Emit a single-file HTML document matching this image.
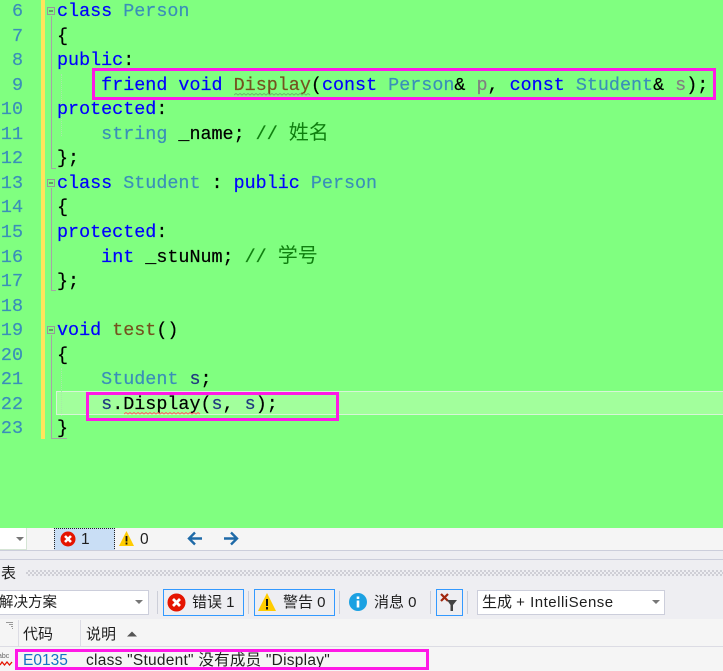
<!DOCTYPE html>
<html lang="zh">
<head>
<meta charset="utf-8">
<style>
html,body{margin:0;padding:0;width:723px;height:670px;overflow:hidden;background:#f5f5f5}
*{box-sizing:border-box}
.a{position:absolute}
#ed{position:absolute;left:0;top:0;width:723px;height:528px;background:#80ff80;overflow:hidden}
.l{position:absolute;left:57px;white-space:pre;font:18.4px/24px "Liberation Mono","Noto Sans CJK SC",monospace;color:#000;height:24px;-webkit-text-stroke:.2px}
.n{position:absolute;left:0;width:23px;text-align:right;font:18.4px/24px "Liberation Mono",monospace;color:#3a8fb8;-webkit-text-stroke:.2px}
.k{color:#0000ff}.t{color:#3a8fb8}.f{color:#74531f}.c{color:#0f7f0f}.p{color:#808080}.v{color:#1f377f}
.zh{font-family:"Noto Sans CJK SC",sans-serif;font-size:20px;line-height:0;-webkit-text-stroke:0;font-weight:400}
.box{position:absolute;border:3px solid #ff19e6}
.u{font:15px/20px "Liberation Sans","Noto Sans CJK SC",sans-serif;color:#1e1e1e;position:absolute;white-space:pre}
.btn{position:absolute;top:589px;height:27px;border:1px solid #3399ff;background:#eeeef2}
.sep{position:absolute;top:591px;width:1px;height:23px;background:#ccced8}
</style>
</head>
<body>
<div id="ed">
  <div class="a" style="left:41px;top:0;width:4px;height:439px;background:#ffe45c"></div>
  <div class="a" style="left:56px;top:391px;width:667px;height:24px;background:#a2ff9c;border:1px solid #d8f5d8;border-right:0"></div>

  <!-- fold guides -->
  <div class="a" style="left:51px;top:16px;width:1px;height:153px;background:#a5a5a5"></div>
  <div class="a" style="left:51px;top:168px;width:5px;height:1px;background:#a5a5a5"></div>
  <div class="a" style="left:51px;top:188px;width:1px;height:103px;background:#a5a5a5"></div>
  <div class="a" style="left:51px;top:290px;width:5px;height:1px;background:#a5a5a5"></div>
  <div class="a" style="left:51px;top:335px;width:1px;height:104px;background:#a5a5a5"></div>
  <div class="a" style="left:51px;top:438px;width:16px;height:1px;background:#a5a5a5"></div>
  <div class="a" style="left:61px;top:74px;width:1px;height:62px;border-left:1px dotted #a8e8a8"></div>
  <div class="a" style="left:61px;top:368px;width:1px;height:48px;border-left:1px dotted #a8e8a8"></div>

  <!-- fold markers -->
  <svg class="a" style="left:47px;top:7px" width="9" height="9"><rect x=".5" y=".5" width="7" height="7" fill="#80ff80" stroke="#999"/><path d="M2 4h4" stroke="#444"/></svg>
  <svg class="a" style="left:47px;top:179px" width="9" height="9"><rect x=".5" y=".5" width="7" height="7" fill="#80ff80" stroke="#999"/><path d="M2 4h4" stroke="#444"/></svg>
  <svg class="a" style="left:47px;top:326px" width="9" height="9"><rect x=".5" y=".5" width="7" height="7" fill="#80ff80" stroke="#999"/><path d="M2 4h4" stroke="#444"/></svg>

  <!-- line numbers -->
  <div class="n" style="top:0px">6</div>
  <div class="n" style="top:25px">7</div>
  <div class="n" style="top:49px">8</div>
  <div class="n" style="top:74px">9</div>
  <div class="n" style="top:98px">10</div>
  <div class="n" style="top:123px">11</div>
  <div class="n" style="top:147px">12</div>
  <div class="n" style="top:172px">13</div>
  <div class="n" style="top:196px">14</div>
  <div class="n" style="top:221px">15</div>
  <div class="n" style="top:246px">16</div>
  <div class="n" style="top:270px">17</div>
  <div class="n" style="top:295px">18</div>
  <div class="n" style="top:319px">19</div>
  <div class="n" style="top:344px">20</div>
  <div class="n" style="top:368px">21</div>
  <div class="n" style="top:393px">22</div>
  <div class="n" style="top:417px">23</div>

  <!-- code -->
  <div class="l" style="top:0px"><span class="k">class</span> <span class="t">Person</span></div>
  <div class="l" style="top:25px">{</div>
  <div class="l" style="top:49px"><span class="k">public</span>:</div>
  <div class="l" style="top:74px">    <span class="k">friend</span> <span class="k">void</span> <span class="f">Display</span>(<span class="k">const</span> <span class="t">Person</span>&amp; <span class="p">p</span>, <span class="k">const</span> <span class="t">Student</span>&amp; <span class="p">s</span>);</div>
  <div class="l" style="top:98px"><span class="k">protected</span>:</div>
  <div class="l" style="top:123px">    <span class="t">string</span> _name; <span class="c">// <span class="zh">姓名</span></span></div>
  <div class="l" style="top:147px">};</div>
  <div class="l" style="top:172px"><span class="k">class</span> <span class="t">Student</span> : <span class="k">public</span> <span class="t">Person</span></div>
  <div class="l" style="top:196px">{</div>
  <div class="l" style="top:221px"><span class="k">protected</span>:</div>
  <div class="l" style="top:246px">    <span class="k">int</span> _stuNum; <span class="c">// <span class="zh">学号</span></span></div>
  <div class="l" style="top:270px">};</div>
  <div class="l" style="top:319px"><span class="k">void</span> <span class="f">test</span>()</div>
  <div class="l" style="top:344px">{</div>
  <div class="l" style="top:368px">    <span class="t">Student</span> <span class="v">s</span>;</div>
  <div class="l" style="top:393px">    <span class="v">s</span>.Display(<span class="v">s</span>, <span class="v">s</span>);</div>
  <div class="l" style="top:417px">}</div>

  <!-- squiggles -->
  <svg class="a" style="left:234px;top:93px" width="77" height="4"><path d="M0 2l2-1.500 2 1.500 2-1.500 2 1.500 2-1.500 2 1.500 2-1.500 2 1.500 2-1.500 2 1.500 2-1.500 2 1.500 2-1.500 2 1.500 2-1.500 2 1.500 2-1.500 2 1.500 2-1.500 2 1.500 2-1.500 2 1.500 2-1.500 2 1.500 2-1.500 2 1.500 2-1.500 2 1.500 2-1.500 2 1.500 2-1.500 2 1.500 2-1.500 2 1.500 2-1.500 2 1.500 2-1.500 2 1.500" fill="none" stroke="#6fb46f"/></svg>
  <svg class="a" style="left:124px;top:412px" width="77" height="4"><path d="M0 2l2-1.500 2 1.500 2-1.500 2 1.500 2-1.500 2 1.500 2-1.500 2 1.500 2-1.500 2 1.500 2-1.500 2 1.500 2-1.500 2 1.500 2-1.500 2 1.500 2-1.500 2 1.500 2-1.500 2 1.500 2-1.500 2 1.500 2-1.500 2 1.500 2-1.500 2 1.500 2-1.500 2 1.500 2-1.500 2 1.500 2-1.500 2 1.500 2-1.500 2 1.500 2-1.500 2 1.500 2-1.500 2 1.500" fill="none" stroke="#ff6464"/></svg>
</div>

<!-- editor status strip -->
<div class="a" style="left:0;top:528px;width:723px;height:22px;background:#f5f5f5"></div>
<div class="a" style="left:0;top:528px;width:27px;height:22px;background:#fff;border-right:1px solid #d5e5d5;border-bottom:1px solid #d5e5d5"></div>
<svg class="a" style="left:16px;top:537px" width="9" height="5"><path d="M0 0h8L4 4z" fill="#777"/></svg>
<div class="a" style="left:54px;top:528px;width:61px;height:23px;background:#c9def5;border:1px dotted #222"></div>
<svg class="a" style="left:60px;top:531px" width="16" height="16"><circle cx="8" cy="8" r="7.500" fill="#e51400"/><path d="M5 5l6 6M11 5l-6 6" stroke="#fff" stroke-width="2.600"/></svg>
<div class="u" style="left:81px;top:530px;font-size:15.500px">1</div>
<svg class="a" style="left:119px;top:531px" width="15" height="15"><path d="M7.500 0L15 15H0z" fill="#ffcc00"/><path d="M7.500 5v5.500M7.500 11.500v2" stroke="#111" stroke-width="1.800"/></svg>
<div class="u" style="left:140px;top:530px;font-size:15.500px">0</div>
<svg class="a" style="left:187px;top:531px" width="16" height="15"><path d="M15 7.500H2M8 1.500L2 7.500l6 6" fill="none" stroke="#1e6aa8" stroke-width="2.400"/></svg>
<svg class="a" style="left:223px;top:531px" width="16" height="15"><path d="M1 7.500h13M8 1.500l6 6-6 6" fill="none" stroke="#1e6aa8" stroke-width="2.400"/></svg>

<!-- error panel -->
<div class="a" style="left:0;top:550px;width:723px;height:1px;background:#cccedb"></div>
<div class="a" style="left:0;top:551px;width:723px;height:68px;background:#eeeef2"></div>
<div class="a" style="left:0;top:559px;width:723px;height:1px;background:#cccedb"></div>
<div class="u" style="left:1px;top:564px">表</div>
<div class="a" style="left:26px;top:570px;width:697px;height:6px;background-image:conic-gradient(#cfcfd6 25%,transparent 0 50%,#cfcfd6 0 75%,transparent 0);background-size:4px 4px"></div>

<div class="a" style="left:0;top:590px;width:149px;height:25px;background:#fff;border:1px solid #cccedb;border-left:0"></div>
<div class="u" style="left:-1px;top:593px;font-size:14.500px">解决方案</div>
<svg class="a" style="left:135px;top:600px" width="9" height="5"><path d="M0 0h8L4 4z" fill="#777"/></svg>
<div class="sep" style="left:157px"></div>

<div class="btn" style="left:163px;width:81px"></div>
<svg class="a" style="left:167px;top:593px" width="19" height="19"><circle cx="9.500" cy="9.500" r="9" fill="#e51400"/><path d="M6 6l7 7M13 6l-7 7" stroke="#fff" stroke-width="2.800"/></svg>
<div class="u" style="left:192px;top:593px">错误 1</div>
<div class="sep" style="left:248px"></div>

<div class="btn" style="left:254px;width:81px"></div>
<svg class="a" style="left:258px;top:593px" width="18" height="18"><path d="M9 0L18 18H0z" fill="#ffcc00"/><path d="M9 6v7M9 14v2.500" stroke="#111" stroke-width="2"/></svg>
<div class="u" style="left:283px;top:593px">警告 0</div>
<div class="sep" style="left:339px"></div>

<svg class="a" style="left:349px;top:593px" width="18" height="18"><circle cx="9" cy="9" r="9" fill="#1ba1e2"/><path d="M9 3.500v2.500M9 7.500v7" stroke="#fff" stroke-width="2.600"/></svg>
<div class="u" style="left:374px;top:593px">消息 0</div>
<div class="sep" style="left:430px"></div>

<div class="btn" style="left:436px;width:27px"></div>
<svg class="a" style="left:440px;top:593px" width="20" height="19"><path d="M1 1l7 7M8 1L1 8" stroke="#a1260d" stroke-width="2.200"/><path d="M7 7h10l-4 5v6h-2.500v-6z" fill="#424242"/></svg>
<div class="sep" style="left:467px"></div>

<div class="a" style="left:477px;top:590px;width:188px;height:25px;background:#fff;border:1px solid #cccedb"></div>
<div class="u" style="left:482px;top:593px">生成 <span style="letter-spacing:.5px">+ IntelliSense</span></div>
<svg class="a" style="left:652px;top:600px" width="9" height="5"><path d="M0 0h8L4 4z" fill="#777"/></svg>

<!-- table -->
<div class="a" style="left:0;top:619px;width:723px;height:51px;background:#f5f5f5"></div>
<div class="a" style="left:0;top:646px;width:723px;height:1px;background:#dcdce4"></div>
<div class="a" style="left:18px;top:620px;width:1px;height:26px;background:#dcdce4"></div>
<div class="a" style="left:80px;top:620px;width:1px;height:26px;background:#dcdce4"></div>
<svg class="a" style="left:6px;top:622px" width="8" height="8"><path d="M0 .5h7M3 2.500h4M5 4.500h2M6 6.500h1" stroke="#999"/></svg>
<div class="u" style="left:23px;top:625px">代码</div>
<div class="u" style="left:86px;top:625px">说明</div>
<svg class="a" style="left:127px;top:631px" width="11" height="6"><path d="M0 5.500L5 .5l5 5z" fill="#555"/></svg>

<div class="u" style="left:-2px;top:652px;font:7px/10px 'Liberation Sans',sans-serif;color:#666">abc</div>
<svg class="a" style="left:0;top:661px" width="13" height="6"><path d="M0 4l2-3 2.500 3 2.500-3 2.500 3 2.500-3" fill="none" stroke="#e51400" stroke-width="1.300"/></svg>
<div class="u" style="left:23px;top:651px;font-size:15.500px;color:#1570c4">E0135</div>
<div class="u" style="left:86px;top:651px;font-size:15.500px;letter-spacing:.25px">class "Student" 没有成员 "Display"</div>

<!-- magenta annotation boxes -->
<div class="box" style="left:92px;top:68px;width:624px;height:32px"></div>
<div class="box" style="left:86px;top:392px;width:253px;height:29px"></div>
<div class="box" style="left:15px;top:649px;width:414px;height:21px"></div>
</body>
</html>
